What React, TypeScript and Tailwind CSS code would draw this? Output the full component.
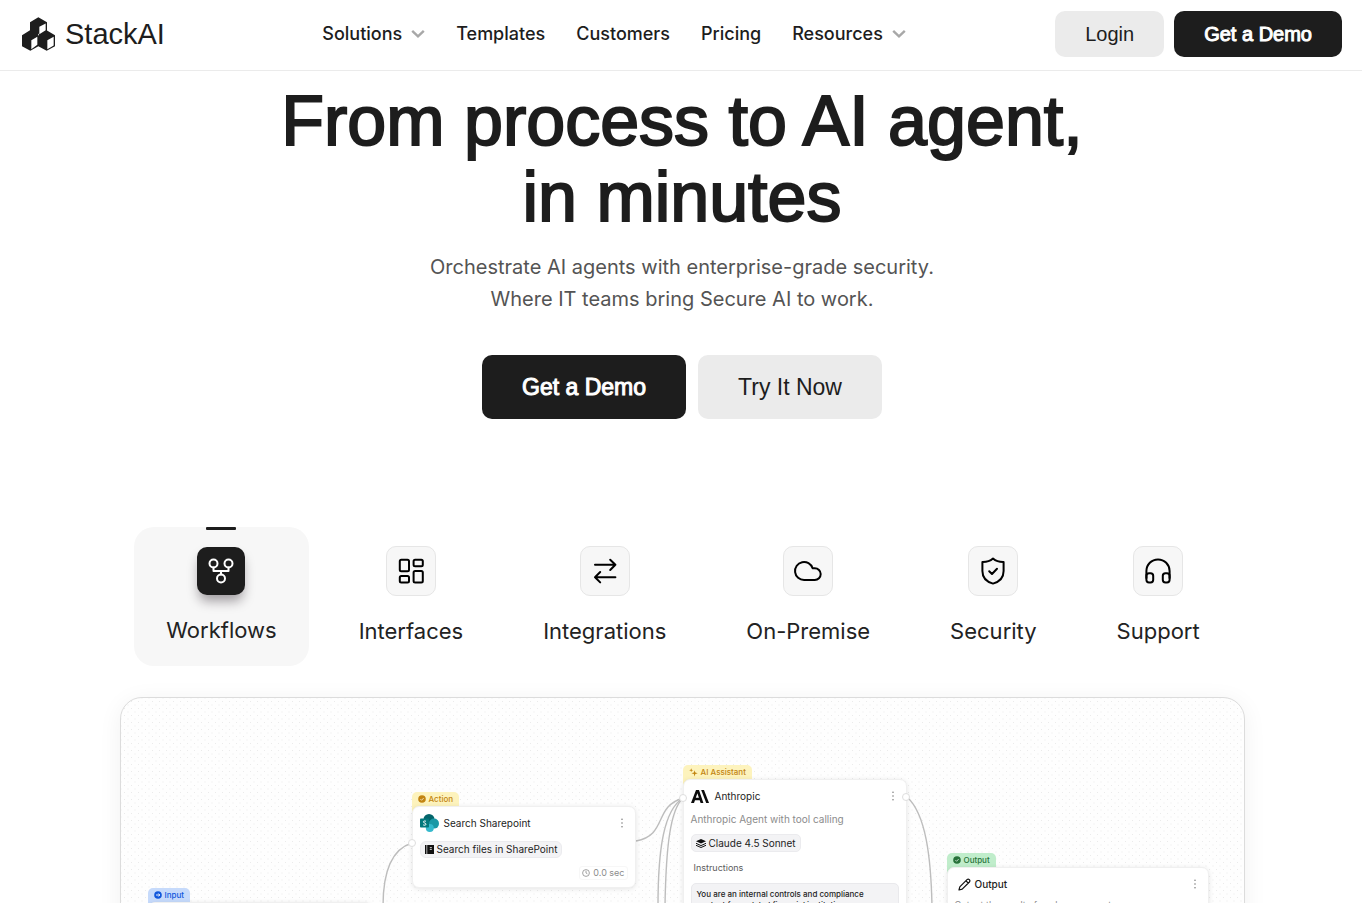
import type { ReactNode } from 'react';

const INTER = "font-['Inter',sans-serif]";
const GROTESK = "font-['Liberation_Sans',sans-serif]";

function Logo() {
  return (
    <a href="#" className="flex items-center gap-[10px] pl-[2px] pr-2 text-[#1d1d1d]">
      <svg width="33" height="34" viewBox="66 51 99 101" aria-hidden="true">
        <path
          fill="currentColor"
          d="M115 51 L141 66 V91 L165 105 V138 L140 152 L115 138 L91 152 L66 138 V105 L90 90 V66 Z"
        />
        <path
          fill="#fff"
          d="M118 80 L137 70 V90 L118 102 Z M94 120 L112 110 V134 L94 147 Z M142 120 L161 110 V136 L142 147 Z M114 100 L117 104 L114 107 Z"
        />
      </svg>
      <span className={`${GROTESK} text-[29px] leading-8`}>StackAI</span>
    </a>
  );
}

function Chevron() {
  return (
    <svg width="14" height="10" viewBox="0 0 14 10" fill="none" stroke="#a8a8a8" strokeWidth="2.4" aria-hidden="true">
      <path d="M1.2 1.8 L7 7.4 L12.8 1.8" />
    </svg>
  );
}

const links = [
  { label: 'Solutions', menu: true },
  { label: 'Templates' },
  { label: 'Customers' },
  { label: 'Pricing' },
  { label: 'Resources', menu: true },
];

function Header() {
  return (
    <header className="sticky top-0 z-20 border-b border-[#ebebeb] bg-white">
      <div className="flex h-[70px] items-center justify-between px-5 pb-[2px]">
        <Logo />
        <nav className="flex items-center gap-[31px] text-[18px] font-medium leading-6">
          {links.map((l) =>
            l.menu ? (
              <button key={l.label} type="button" className="flex items-center gap-[9px]">
                {l.label}
                <Chevron />
              </button>
            ) : (
              <a key={l.label} href="#">
                {l.label}
              </a>
            ),
          )}
        </nav>
        <div className={`flex gap-[10px] text-[20px] ${GROTESK}`}>
          <a href="#" className="flex h-[46px] items-center rounded-[10px] bg-[#ebebeb] px-[30px]">
            Login
          </a>
          <a
            href="#"
            className="flex h-[46px] items-center rounded-[10px] bg-[#1d1d1d] px-[30px] text-white [-webkit-text-stroke:1px_white]"
          >
            Get a Demo
          </a>
        </div>
      </div>
    </header>
  );
}

function Hero() {
  return (
    <section className="flex flex-col items-center px-5 pt-3 text-center">
      <h1 className={`${GROTESK} text-[70px] leading-[76px] [-webkit-text-stroke:2px_#1d1d1d]`}>
        From process to AI agent,
        <br />
        in minutes
      </h1>
      <p className="mt-4 text-[20px] leading-8 text-[#545454]">
        Orchestrate AI agents with enterprise-grade security.
        <br />
        Where IT teams bring Secure AI to work.
      </p>
      <div className={`mt-10 flex gap-3 text-[23px] ${GROTESK}`}>
        <a
          href="#"
          className="flex h-16 items-center rounded-[10px] bg-[#1d1d1d] px-10 text-white [-webkit-text-stroke:1px_white]"
        >
          Get a Demo
        </a>
        <a href="#" className="flex h-16 items-center rounded-[10px] bg-[#ebebeb] px-10">
          Try It Now
        </a>
      </div>
    </section>
  );
}

const stroke = { fill: 'none', stroke: 'currentColor', strokeWidth: 2, strokeLinecap: 'round', strokeLinejoin: 'round' } as const;

const tabs: { label: string; active?: boolean; icon: ReactNode }[] = [
  {
    label: 'Workflows',
    active: true,
    icon: (
      <svg width="30" height="30" viewBox="0 0 30 30" {...stroke}>
        <circle cx="7.5" cy="7.5" r="4" />
        <circle cx="22.5" cy="7.5" r="4" />
        <circle cx="15" cy="22.5" r="4" />
        <path d="M7.5 11.5 V15 H22.5 V11.5 M15 15 V18.5" />
      </svg>
    ),
  },
  {
    label: 'Interfaces',
    icon: (
      <svg width="30" height="30" viewBox="0 0 30 30" {...stroke}>
        <rect x="3.8" y="3.8" width="9.2" height="11.4" rx="1.5" />
        <rect x="17.6" y="3.8" width="9.2" height="6.4" rx="1.5" />
        <rect x="17.6" y="15" width="9.2" height="11.4" rx="1.5" />
        <rect x="3.8" y="20" width="9.2" height="6.4" rx="1.5" />
      </svg>
    ),
  },
  {
    label: 'Integrations',
    icon: (
      <svg width="30" height="30" viewBox="0 0 30 30" {...stroke}>
        <path d="M5 8.8 H25.4 M20.2 3.8 L25.4 8.8 L20.2 14 M25.4 21.2 H5 M10.2 16 L5 21.2 L10.2 26.4" />
      </svg>
    ),
  },
  {
    label: 'On-Premise',
    icon: (
      <svg width="30" height="30" viewBox="0 0 30 30" {...stroke}>
        <path d="M11.2 24 A9 9 0 1 1 19.6 12.2 H21.8 A5.9 5.9 0 1 1 21.8 24 Z" />
      </svg>
    ),
  },
  {
    label: 'Security',
    icon: (
      <svg width="30" height="30" viewBox="0 0 30 30" {...stroke}>
        <path d="M15 2.6 C17.6 4.9 21.2 6.2 25.6 6.1 V15 C25.6 21.6 21.4 25.8 15 27.6 C8.6 25.8 4.4 21.6 4.4 15 V6.1 C8.8 6.2 12.4 4.9 15 2.6 Z" />
        <path d="M11.2 15.2 L14 18 L19 12.8" />
      </svg>
    ),
  },
  {
    label: 'Support',
    icon: (
      <svg width="30" height="30" viewBox="0 0 30 30" {...stroke}>
        <path d="M3.4 22 V15 A11.6 11.6 0 0 1 26.6 15 V22" />
        <rect x="3.4" y="17.2" width="6.8" height="9.2" rx="2.6" />
        <rect x="19.8" y="17.2" width="6.8" height="9.2" rx="2.6" />
      </svg>
    ),
  },
];

function Tabs() {
  return (
    <div role="tablist" className="mt-[107px] flex items-center justify-center gap-5">
      {tabs.map((t) => (
        <button
          key={t.label}
          type="button"
          role="tab"
          aria-selected={!!t.active}
          className={`relative flex flex-col items-center gap-5 py-5 text-[22px] leading-[31px] text-[#222] ${
            t.active ? 'rounded-[20px] bg-[#f7f7f7] px-8' : 'px-[30px]'
          }`}
        >
          {t.active && <span className="absolute left-1/2 top-0 h-[3px] w-[30px] -translate-x-1/2 rounded-[1px] bg-[#1d1d1d]" />}
          <span
            className={
              t.active
                ? 'grid size-12 place-items-center rounded-[10px] bg-[#1d1d1d] text-white shadow-[0_8px_12px_-2px_rgba(30,20,30,0.4)]'
                : 'grid size-[50px] place-items-center rounded-[10px] border border-[#e6e6e6] bg-[#f7f7f7] text-black'
            }
          >
            {t.icon}
          </span>
          {t.label}
        </button>
      ))}
    </div>
  );
}

function Dots() {
  return (
    <svg className="ml-auto" width="4" height="10" viewBox="0 0 4 10" fill="#808080" aria-hidden="true">
      <circle cx="2" cy="1.2" r="0.8" />
      <circle cx="2" cy="5" r="0.8" />
      <circle cx="2" cy="8.8" r="0.8" />
    </svg>
  );
}

function CheckBadge() {
  return (
    <svg width="8" height="8" viewBox="0 0 8 8" aria-hidden="true">
      <circle cx="4" cy="4" r="3.8" fill="currentColor" />
      <path d="M2.4 4.1 L3.6 5.3 L5.7 3" fill="none" stroke="#fff" strokeOpacity="0.75" strokeWidth="0.9" />
    </svg>
  );
}

function Node(p: { place: string; tag: string; tagStyle: string; icon: ReactNode; children: ReactNode }) {
  return (
    <div className={`absolute ${p.place}`}>
      <div
        className={`-mb-2 flex h-[22px] w-fit gap-[3px] rounded-t-[5px] px-[6px] text-[8px] font-medium leading-[14px] ${p.tagStyle}`}
      >
        <span className="flex h-[14px] items-center">{p.icon}</span>
        {p.tag}
      </div>
      <div className="relative rounded-[7px] border border-[#f0f0f0] bg-white shadow-[0_1px_5px_rgba(0,0,0,0.1)]">{p.children}</div>
    </div>
  );
}

function Canvas() {
  return (
    <section className="relative mx-auto mt-[30px] h-[620px] w-full max-w-[1125px] overflow-hidden rounded-[22px] border border-[#dcdcdc] bg-[#fefefe] bg-[radial-gradient(circle,#ebebeb_0.8px,transparent_1px),radial-gradient(circle,#ebebeb_0.8px,transparent_1px)] bg-[length:7px_7px] bg-[position:0_0,3.5px_3.5px] shadow-[0_4px_24px_rgba(0,0,0,0.06)]">
      <svg className="absolute left-0 top-0" width="1123" height="618" fill="none" stroke="#bdbdbd" strokeWidth="1.4" aria-hidden="true">
        <path d="M291 145 C268 152 262 180 262 208" />
        <path d="M515 143 C547 137 532 109 562 100" />
        <path d="M562 100 C543 112 537 150 537 208" />
        <path d="M562 100 C549 112 545 150 544 208" />
        <path d="M786 99 C805 116 810 160 811 208" />
      </svg>

      <Node
        place="left-[27px] top-[190px] w-[224px]"
        tag="Input"
        tagStyle="bg-[#c6dafb] text-[#1057dc]"
        icon={
          <svg width="8" height="8" viewBox="0 0 8 8" aria-hidden="true">
            <circle cx="4" cy="4" r="3.8" fill="currentColor" />
            <path d="M2 4 H5.8 M4.3 2.5 L5.8 4 L4.3 5.5" fill="none" stroke="#fff" strokeWidth="0.9" />
          </svg>
        }
      >
        <div className="h-[90px]" />
      </Node>

      <Node
        place="left-[291px] top-[94px] w-[224px]"
        tag="Action"
        tagStyle="bg-[#fdf3bd] text-[#c28410]"
        icon={<CheckBadge />}
      >
        <div className="px-[7px] pb-[7px] pt-[6px]">
          <div className="flex h-[20px] items-center gap-[5px] pr-1 text-[10px]">
            <svg width="19" height="18" viewBox="0 0 19 18" aria-hidden="true">
              <circle cx="9" cy="5.5" r="5.5" fill="#03656b" />
              <circle cx="14" cy="9.6" r="5" fill="#1b98a5" />
              <circle cx="9.8" cy="14" r="4" fill="#35b9cc" />
              <rect x="0" y="4.6" width="9" height="9" rx="0.8" fill="#03787c" />
              <path
                d="M6 7.4 C5.2 6.8 3.4 6.8 3.4 7.9 C3.4 9.2 6 8.8 6 10.2 C6 11.5 4 11.4 3.1 10.8"
                fill="none"
                stroke="#fff"
                strokeWidth="1"
              />
            </svg>
            Search Sharepoint
            <Dots />
          </div>
          <div className="mt-2 flex h-[17px] w-fit items-center gap-[3px] rounded-[6px] border border-[#ebebee] bg-[#f3f3f5] px-1 text-[10px]">
            <svg width="9" height="9" viewBox="0 0 9 9" aria-hidden="true">
              <path d="M0 0 H9 V9 H0 Z" fill="#111" />
              <path d="M1.8 0 V9" stroke="#f3f3f5" strokeWidth="0.7" />
              <path d="M4.8 2.6 H6.8 M4.8 4.4 H6.8" stroke="#fff" strokeWidth="0.8" />
            </svg>
            Search files in SharePoint
          </div>
          <div className="ml-auto mt-2 flex h-[14px] w-fit items-center gap-[3px] rounded-[3px] border border-[#f7f7f7] px-[2px] text-[9px] text-[#8c8c8c]">
            <svg width="8" height="8" viewBox="0 0 8 8" fill="none" stroke="currentColor" strokeWidth="0.8" aria-hidden="true">
              <circle cx="4" cy="4" r="3.4" />
              <path d="M4 1.8 V4 L5.4 4.8" />
            </svg>
            0.0 sec
          </div>
        </div>
      </Node>

      <Node
        place="left-[562px] top-[67px] w-[224px]"
        tag="AI Assistant"
        tagStyle="bg-[#fdf3bd] text-[#c28410]"
        icon={
          <svg width="9" height="9" viewBox="0 0 9 9" fill="currentColor" aria-hidden="true">
            <path d="M5.6 2.2 L6.3 4.5 L8.8 5.3 L6.3 6.1 L5.6 8.6 L4.9 6.1 L2.4 5.3 L4.9 4.5 Z M2.2 0.3 L2.7 1.8 L4.2 2.3 L2.7 2.8 L2.2 4.3 L1.7 2.8 L0.2 2.3 L1.7 1.8 Z" />
          </svg>
        }
      >
        <div className="px-[7px] pb-[10px] pt-[6px]">
          <div className="flex h-[20px] items-center gap-[6px] pr-1 text-[10px]">
            <svg width="18" height="13" viewBox="0 0 18 13" fill="#0c0c0c" aria-hidden="true">
              <path
                fillRule="evenodd"
                d="M5 0 H8 L12.4 13 H9.6 L8.7 10.2 H4 L3 13 H0 Z M6.4 3.2 L4.8 7.8 H7.9 Z"
              />
              <path d="M10.2 0 H13 L18 13 H15.2 Z" />
            </svg>
            Anthropic
            <Dots />
          </div>
          <p className="mt-[6px] text-[10px] leading-[14px] text-[#8c8c8c]">Anthropic Agent with tool calling</p>
          <div className="mt-2 flex h-[18px] w-fit items-center gap-[3px] rounded-[5px] border border-[#ebebee] bg-[#f3f3f5] px-1 text-[10px]">
            <svg width="10" height="9" viewBox="0 0 10 9" fill="#111" aria-hidden="true">
              <path d="M5 0 L10 2.3 L5 4.6 L0 2.3 Z" />
              <path d="M0 4.3 L5 6.6 L10 4.3 M0 6.3 L5 8.5 L10 6.3" fill="none" stroke="#111" strokeWidth="1" />
            </svg>
            Claude 4.5 Sonnet
          </div>
          <p className="mt-[9px] px-[3px] text-[9px] leading-[14px] text-[#5c5c5c]">Instructions</p>
          <p className="mt-2 rounded-[5px] border border-[#e9e9ec] bg-[#f3f3f5] px-[5px] py-[5px] text-[8px] font-medium leading-[11px]">
            You are an internal controls and compliance
            <br />
            context for a global financial institution.
          </p>
        </div>
      </Node>

      <Node
        place="left-[826px] top-[155px] w-[262px]"
        tag="Output"
        tagStyle="bg-[#c0edcb] text-[#27723a]"
        icon={<CheckBadge />}
      >
        <div className="px-[7px] pb-[10px] pt-[6px]">
          <div className="flex h-[20px] items-center gap-1 pl-[3px] pr-1 text-[10px] font-medium">
            <svg
              width="13"
              height="13"
              viewBox="0 0 13 13"
              fill="none"
              stroke="#111"
              strokeWidth="1.2"
              strokeLinejoin="round"
              aria-hidden="true"
            >
              <path d="M1 12 L1.8 8.8 L9 1.6 C10.6 0.2 12.8 2.4 11.4 4 L4.2 11.2 Z M8 2.8 L10.2 5" />
            </svg>
            Output
            <Dots />
          </div>
          <p className="mt-1 text-[9px] leading-[14px] text-[#8c8c8c]">Output the result of each component</p>
        </div>
      </Node>

      <svg className="absolute left-0 top-0" width="1123" height="618" fill="#fff" stroke="#dedede" aria-hidden="true">
        <circle cx="291" cy="145" r="3.5" />
        <circle cx="562" cy="100" r="3.5" />
        <circle cx="785" cy="99" r="3.5" />
      </svg>
    </section>
  );
}

export default function App() {
  return (
    <div className={`h-screen overflow-y-auto bg-white text-[#1d1d1d] [scrollbar-width:none] ${INTER}`}>
      <Header />
      <main className="pb-16 pl-[2px]">
        <Hero />
        <Tabs />
        <Canvas />
      </main>
    </div>
  );
}
